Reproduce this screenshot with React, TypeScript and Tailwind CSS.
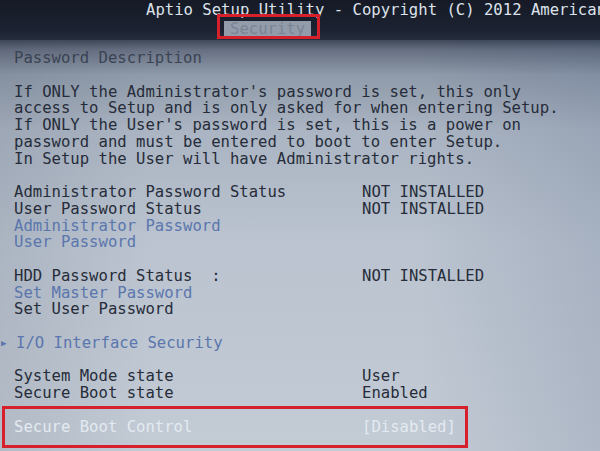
import React from "react";

type Row = {
  l?: string;
  r?: string;
  c?: "d" | "b" | "w";
  arrow?: boolean;
};

const rows: Row[] = [
  { l: "Password Description", c: "d" },
  {},
  { l: "If ONLY the Administrator's password is set, this only" },
  { l: "access to Setup and is only asked for when entering Setup." },
  { l: "If ONLY the User's password is set, this is a power on" },
  { l: "password and must be entered to boot to enter Setup." },
  { l: "In Setup the User will have Administrator rights." },
  {},
  { l: "Administrator Password Status", r: "NOT INSTALLED" },
  { l: "User Password Status", r: "NOT INSTALLED" },
  { l: "Administrator Password", c: "b" },
  { l: "User Password", c: "b" },
  {},
  { l: "HDD Password Status  :", r: "NOT INSTALLED" },
  { l: "Set Master Password", c: "b" },
  { l: "Set User Password" },
  {},
  { l: "I/O Interface Security", c: "b", arrow: true },
  {},
  { l: "System Mode state", r: "User" },
  { l: "Secure Boot state", r: "Enabled" },
  {},
  { l: "Secure Boot Control", r: "[Disabled]", c: "w" },
];

function colorOf(c?: string) {
  if (c === "b") return "text-[#5a76ad]";
  if (c === "w") return "text-[#e4eaf1]";
  if (c === "d") return "text-[#3a4352]";
  return "text-[#262c39]";
}

export default function App() {
  return (
    <div
      className="relative w-[600px] h-[451px] overflow-hidden bg-[#1b2030] text-[15.6px]"
      style={{ fontFamily: '"DejaVu Sans Mono", "Liberation Mono", monospace' }}
    >
      {/* Header */}
      <div className="h-[40px] overflow-hidden bg-[linear-gradient(180deg,#161a26_0px,#1c2231_30px,#262d3c_40px)]">
        <div className="pl-[146px] pt-[2px] leading-[16px] whitespace-pre overflow-hidden text-[#dde3ec]">
          Aptio Setup Utility - Copyright (C) 2012 American
        </div>
        <div className="pl-[224px]">
          <div className="inline-block h-[16px] leading-[16px] px-[6px] bg-[#929cab] text-[#7a8494]">
            Security
          </div>
        </div>
      </div>

      {/* Body */}
      <div className="h-[411px] pt-[10px] pl-[14px] leading-[16.75px] bg-[linear-gradient(90deg,rgba(40,50,70,0.10)_0%,rgba(0,0,0,0)_25%,rgba(0,0,0,0)_70%,rgba(50,70,110,0.14)_100%),linear-gradient(180deg,#3e4858_0px,#667082_10px,#8f9aaa_35px,#aab4c2_90px,#bac3cf_200px,#c3cbd5_411px)]">
        {rows.map((row, i) => (
          <div key={i} className={`flex h-[16.75px] whitespace-pre ${colorOf(row.c)}`}>
            {row.arrow ? (
              <>
                <span className="-ml-[13px] w-[15px] text-[9px] text-[#5a76ad]">▶</span>
                <span>{row.l}</span>
              </>
            ) : (
              <>
                <span className="w-[348px]">{row.l ?? ""}</span>
                <span>{row.r ?? ""}</span>
              </>
            )}
          </div>
        ))}
      </div>

      {/* Red annotation boxes */}
      <div className="absolute left-[217px] top-[14px] w-[103px] h-[25px] border-[3px] border-[#d6202b]" />
      <div className="absolute left-[2px] top-[406px] w-[466px] h-[42px] border-[3px] border-[#d6202b]" />
    </div>
  );
}
